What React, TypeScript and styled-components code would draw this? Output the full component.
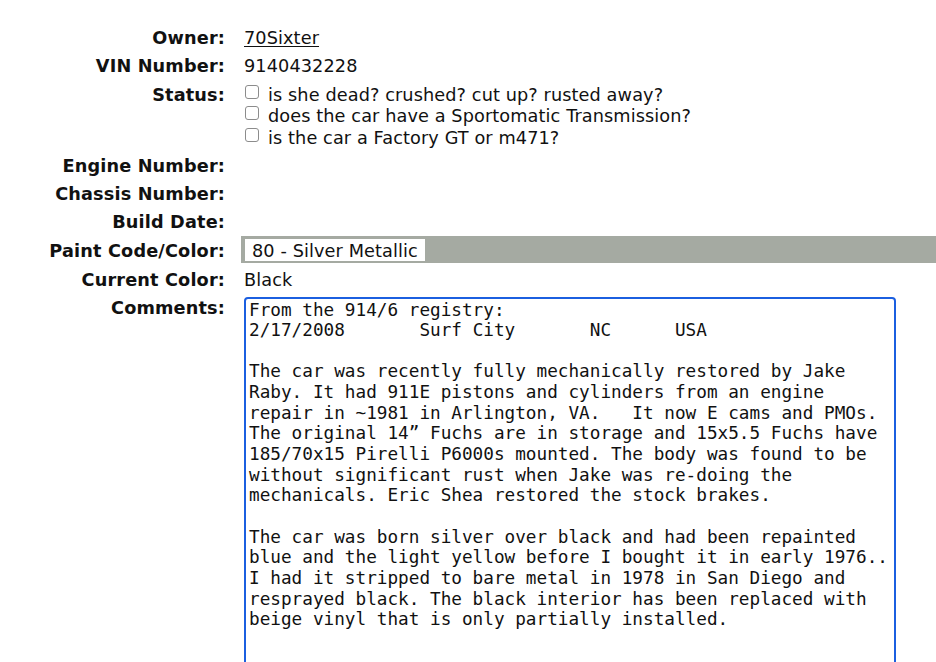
import React from "react";
import styled, { createGlobalStyle } from "styled-components";

const GlobalStyle = createGlobalStyle`
  html, body {
    margin: 0;
    padding: 0;
    background: #ffffff;
    overflow: hidden;
  }
  body {
    font-family: "DejaVu Sans", Verdana, sans-serif;
    font-size: 17.7px;
    color: #111111;
  }
`;

const Sheet = styled.div`
  display: grid;
  grid-template-columns: 225px 1fr;
  column-gap: 19px;
  row-gap: 6.75px;
  padding-top: 28px;
  line-height: 21.5px;
`;

const Label = styled.div`
  font-weight: bold;
  text-align: right;
  white-space: nowrap;
  letter-spacing: 0.15px;
`;

const Value = styled.div`
  min-width: 0;
  letter-spacing: 0.1px;
`;

const OwnerLink = styled.a`
  color: #111111;
  text-decoration: underline;
  text-underline-offset: 2px;
`;

const StatusList = styled.div`
  display: flex;
  flex-direction: column;
`;

const CheckRow = styled.label`
  display: flex;
  align-items: flex-start;
  gap: 9px;
  height: 21.5px;
`;

const Check = styled.input.attrs({ type: "checkbox" })`
  appearance: none;
  -webkit-appearance: none;
  box-sizing: border-box;
  width: 14px;
  height: 14px;
  margin: 0 0 0 1px;
  border: 1px solid #8c8c8c;
  border-radius: 3px;
  background: #ffffff;
  flex: none;
`;

const SwatchBar = styled.div`
  margin: -4.5px 0 0 -3px;
  padding: 3px 0 2px 4px;
  background: #a5aaa2;
  display: flex;
`;

const SwatchName = styled.span`
  background: #ffffff;
  padding: 3px 7px 0;
  line-height: 19px;
`;

const Notes = styled.textarea`
  box-sizing: border-box;
  display: block;
  width: 652px;
  height: 420px;
  margin: -1px 0 0;
  padding: 0.5px 0 2px 3px;
  border: 2px solid #1b5fe0;
  border-radius: 4px;
  outline: none;
  resize: none;
  overflow: hidden;
  font-family: "DejaVu Sans Mono", Menlo, monospace;
  font-size: 17.7px;
  line-height: 20.65px;
  letter-spacing: 0;
  color: #111111;
  tab-size: 8;
  -moz-tab-size: 8;
  background: #ffffff;
`;

const comments = `From the 914/6 registry:
2/17/2008\tSurf City\tNC\tUSA

The car was recently fully mechanically restored by Jake Raby. It had 911E pistons and cylinders from an engine repair in ~1981 in Arlington, VA.   It now E cams and PMOs. The original 14\u201d Fuchs are in storage and 15x5.5 Fuchs have 185/70x15 Pirelli P6000s mounted. The body was found to be without significant rust when Jake was re-doing the mechanicals. Eric Shea restored the stock brakes.

The car was born silver over black and had been repainted blue and the light yellow before I bought it in early 1976.. I had it stripped to bare metal in 1978 in San Diego and resprayed black. The black interior has been replaced with beige vinyl that is only partially installed.
`;

const statusOptions = [
  "is she dead? crushed? cut up? rusted away?",
  "does the car have a Sportomatic Transmission?",
  "is the car a Factory GT or m471?",
];

export default function App() {
  return (
    <>
      <GlobalStyle />
      <Sheet>
        <Label>Owner:</Label>
        <Value>
          <OwnerLink href="#">70Sixter</OwnerLink>
        </Value>

        <Label>VIN Number:</Label>
        <Value>9140432228</Value>

        <Label>Status:</Label>
        <Value>
          <StatusList>
            {statusOptions.map((text) => (
              <CheckRow key={text}>
                <Check />
                <span>{text}</span>
              </CheckRow>
            ))}
          </StatusList>
        </Value>

        <Label>Engine Number:</Label>
        <Value />

        <Label>Chassis Number:</Label>
        <Value />

        <Label>Build Date:</Label>
        <Value />

        <Label>Paint Code/Color:</Label>
        <Value>
          <SwatchBar>
            <SwatchName>80 - Silver Metallic</SwatchName>
          </SwatchBar>
        </Value>

        <Label>Current Color:</Label>
        <Value>Black</Value>

        <Label>Comments:</Label>
        <Value>
          <Notes defaultValue={comments} spellCheck={false} />
        </Value>
      </Sheet>
    </>
  );
}
